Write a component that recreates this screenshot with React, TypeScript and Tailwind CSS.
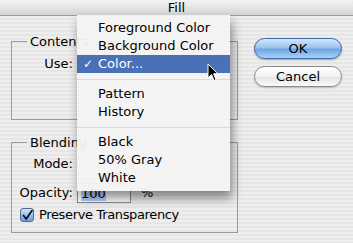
import React from 'react';

const MENU_ITEMS: (string | null)[] = [
  'Foreground Color',
  'Background Color',
  'Color...',
  null,
  'Pattern',
  'History',
  null,
  'Black',
  '50% Gray',
  'White',
];

function Cursor() {
  return (
    <svg className="absolute left-[207px] top-[63px]" width="12" height="19" viewBox="0 0 12 19">
      <path d="M1 1 L1 15 L4.5 11.5 L7 17.5 L9 16.6 L6.6 10.8 L11 10.8 Z" fill="#000" stroke="#fff" strokeWidth="1" strokeLinejoin="round" />
    </svg>
  );
}

function GroupBox(props: { label: string; className: string; children: React.ReactNode }) {
  return (
    <fieldset className={`border border-[#9a9a9a] px-0 ${props.className}`}>
      <legend className="ml-[15px] px-[3px] leading-[15px] text-[13px]">{props.label}</legend>
      {props.children}
    </fieldset>
  );
}

export default function App() {
  return (
    <div className="relative h-[243px] w-[353px] overflow-hidden bg-[repeating-linear-gradient(to_bottom,#eeeeee_0px,#eeeeee_2px,#e6e6e6_2px,#e6e6e6_4px)] font-['DejaVu_Sans',sans-serif] text-[13px] text-black">
      <div className="flex h-[16px] items-center justify-center rounded-t-[5px] border-b border-[#9c9c9c] bg-[linear-gradient(to_bottom,#f4f4f4,#d4d4d4)] text-[13px] leading-none">
        Fill
      </div>

      <div className="flex pl-[11px] pt-[18px]">
        <div className="flex w-[227px] flex-col gap-[15px]">
          <GroupBox label="Contents" className="h-[86px]">
            <div className="mt-[5px] flex h-[20px] items-center">
              <span className="w-[61px] text-right">Use:</span>
              <div className="ml-[4px] h-[20px] w-[150px] rounded-[4px] border border-[#bdbdbd] bg-white" />
            </div>
          </GroupBox>

          <GroupBox label="Blending" className="h-[98px]">
            <div className="mt-[4px] flex h-[20px] items-center">
              <span className="w-[61px] text-right">Mode:</span>
              <div className="ml-[4px] flex h-[20px] w-[150px] items-center justify-end rounded-[4px] border border-[#cfcfcf] bg-[#f2f2f2] px-[8px]">
                <svg width="7" height="11" viewBox="0 0 7 11">
                  <path d="M3.5 0.5 L6.5 4 L0.5 4 Z M3.5 10.5 L6.5 7 L0.5 7 Z" fill="#c4c4c4" />
                </svg>
              </div>
            </div>
            <div className="mt-[9px] flex h-[20px] items-center">
              <span className="w-[61px] text-right">Opacity:</span>
              <div className="ml-[4px] flex h-[20px] w-[54px] items-center border border-[#8c8c8c] border-t-[#6e6e6e] bg-white pl-[3px] shadow-[inset_0_1px_1px_rgba(0,0,0,0.25)]">
                <span className="bg-[#b5d3ff] leading-[15px]">100</span>
              </div>
              <span className="ml-[10px]">%</span>
            </div>
            <div className="mt-[4px] flex h-[16px] items-center pl-[8px]">
              <div className="flex h-[14px] w-[14px] items-center justify-center rounded-[3px] border border-[#4a6a9a] bg-[linear-gradient(to_bottom,#cfe2fa,#6a9fe0)]">
                <svg width="11" height="11" viewBox="0 0 11 11">
                  <path d="M1.5 5.5 L4.2 9 L10 0.5" fill="none" stroke="#111" strokeWidth="1.8" strokeLinecap="round" strokeLinejoin="round" />
                </svg>
              </div>
              <span className="ml-[5px] tracking-[-0.35px]">Preserve Transparency</span>
            </div>
          </GroupBox>
        </div>

        <div className="ml-[16px] flex flex-col gap-[7px] pt-[4px]">
          <button
            type="button"
            className="flex h-[21px] w-[88px] items-center justify-center rounded-full border border-[#3a68a8] bg-[linear-gradient(to_bottom,#d5e6fa_0%,#9cc4ef_45%,#6ea6e6_55%,#a9d2f7_100%)] text-[13px] shadow-[0_1px_2px_rgba(0,0,0,0.3)]"
          >
            OK
          </button>
          <button
            type="button"
            className="flex h-[21px] w-[88px] items-center justify-center rounded-full border border-[#8a8a8a] bg-[linear-gradient(to_bottom,#ffffff_0%,#f2f2f2_50%,#e4e4e4_55%,#fbfbfb_100%)] text-[13px] shadow-[0_1px_2px_rgba(0,0,0,0.2)]"
          >
            Cancel
          </button>
        </div>
      </div>

      <div className="absolute left-[77px] top-[15px] w-[153px] bg-[#f4f4f4]/[0.96] py-[4px] shadow-[2px_7px_10px_rgba(0,0,0,0.45)]">
        {MENU_ITEMS.map((item, i) =>
          item === null ? (
            <div key={i} className="flex h-[12px] items-center">
              <div className="h-px w-full bg-[#d9d9d9]" />
            </div>
          ) : (
            <div
              key={i}
              className={`flex h-[18px] items-center ${item === 'Color...' ? 'bg-[#4a70b5] text-white' : ''}`}
            >
              <span className="w-[16px] text-right text-[12px]">{item === 'Color...' ? '✓' : ''}</span>
              <span className="ml-[5px]">{item}</span>
            </div>
          ),
        )}
      </div>

      <Cursor />
    </div>
  );
}
